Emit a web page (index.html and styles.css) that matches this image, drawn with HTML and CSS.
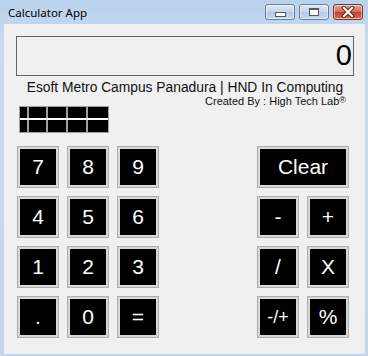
FILE: index.html
```html
<!DOCTYPE html>
<html lang="en">
<head>
    <meta charset="UTF-8">
    <meta name="viewport" content="width=device-width, initial-scale=1.0">
    <title>Calculator App</title>
    <link rel="stylesheet" href="styles.css">
</head>
<body>
    <div class="window">
        <div class="titlebar">
            <span class="title">Calculator App</span>
            <div class="controls">
                <span class="ctl"><span class="min-icon"></span></span>
                <span class="ctl"><span class="max-icon"></span></span>
                <span class="ctl close">
                    <svg width="16" height="12" viewBox="0 0 16 12">
                        <path d="M4 2 L12 10 M12 2 L4 10" stroke="#5a2a22" stroke-width="4" stroke-linecap="square"/>
                        <path d="M4 2 L12 10 M12 2 L4 10" stroke="#ffffff" stroke-width="2" stroke-linecap="square"/>
                    </svg>
                </span>
            </div>
        </div>

        <div class="client">
            <div class="display">0</div>
            <p class="campus">Esoft Metro Campus Panadura | HND In Computing</p>
            <p class="credit">Created By : High Tech Lab<span class="reg">&reg;</span></p>

            <!-- history grid -->
            <div class="history">
                <span></span><span></span><span></span><span></span><span></span>
                <span></span><span></span><span></span><span></span><span></span>
            </div>

            <div class="keypad">
                <div class="digits">
                    <button>7</button>
                    <button>8</button>
                    <button>9</button>
                    <button>4</button>
                    <button>5</button>
                    <button>6</button>
                    <button>1</button>
                    <button>2</button>
                    <button>3</button>
                    <button>.</button>
                    <button>0</button>
                    <button>=</button>
                </div>
                <div class="ops">
                    <button class="wide">Clear</button>
                    <button>-</button>
                    <button>+</button>
                    <button>/</button>
                    <button>X</button>
                    <button class="small">-/+</button>
                    <button>%</button>
                </div>
            </div>
        </div>
    </div>
</body>
</html>
```

FILE: styles.css
```css
body {
    margin: 0;
    font-family: "Liberation Sans", Arial, sans-serif;
}

.window {
    width: 368px;
    height: 356px;
    box-sizing: border-box;
    padding: 0 3px 2px 4px;
    display: flex;
    flex-direction: column;
    background: linear-gradient(#b9d1ea, #c6daf0 40px, #c2d7ee);
}

.titlebar {
    height: 24px;
    display: flex;
    align-items: flex-start;
    flex-shrink: 0;
}

.title {
    font-family: "Noto Sans", sans-serif;
    font-size: 11.5px;
    line-height: 16px;
    margin: 5px 0 0 4px;
    color: #000000;
}

.controls {
    margin: 4px 2px 0 auto;
    display: flex;
    gap: 4px;
}

.ctl {
    width: 30px;
    height: 16px;
    box-sizing: border-box;
    border: 1px solid #6b7f99;
    border-radius: 3px;
    background: linear-gradient(#dfe9f5, #c3d4e9 50%, #b3c8e1 51%, #c8d9ee);
    box-shadow: inset 0 0 0 1px rgba(255, 255, 255, 0.5);
    display: flex;
    align-items: center;
    justify-content: center;
}

.close {
    border-color: #7a3a30;
    background: linear-gradient(#e8a094, #d56a58 50%, #c2402c 51%, #d0705c);
}

.min-icon {
    width: 9px;
    height: 3px;
    margin-top: 4px;
    background: #ffffff;
    border: 1px solid #4a5a70;
}

.max-icon {
    width: 8px;
    height: 5px;
    background: #ffffff;
    border: 1px solid #4a5a70;
    border-top-width: 2px;
    box-shadow: inset 0 0 0 1px #ffffff;
}

.client {
    flex: 1;
    background: #f0f0f0;
    padding: 12px 11px 0 12px;
}

.display {
    height: 40px;
    box-sizing: border-box;
    border: 1px solid #646464;
    text-align: right;
    font-size: 29px;
    line-height: 36px;
    padding-right: 1px;
    color: #000000;
}

.campus {
    margin: 4px 0 0;
    text-align: center;
    font-size: 13.8px;
    line-height: 15px;
    color: #111111;
}

.credit {
    margin: 0;
    text-align: right;
    padding-right: 8px;
    font-size: 11px;
    line-height: 12px;
    color: #111111;
}

.credit .reg {
    font-size: 9px;
    vertical-align: 2px;
    line-height: 8px;
}

.history {
    margin: -1px 0 0 3px;
    width: 90px;
    box-sizing: border-box;
    display: grid;
    grid-template-columns: 7px 19px 20px 20px 22px;
    grid-template-rows: 11px 12px;
    row-gap: 2px;
    background: #ffffff;
    border: 1px solid #a0a0a0;
}

.history span {
    background: #000000;
    border-left: 2px solid #a0a0a0;
}

.history span:nth-child(5n+1) {
    border-left: none;
}

.keypad {
    margin-top: 13px;
    padding: 0 5px 0 1px;
    display: flex;
    justify-content: space-between;
}

.digits {
    display: grid;
    grid-template-columns: repeat(3, 42px);
    grid-auto-rows: 42px;
    gap: 8px;
}

.ops {
    display: grid;
    grid-template-columns: repeat(2, 42px);
    grid-auto-rows: 42px;
    gap: 8px;
}

button {
    margin: 0;
    padding: 0;
    background: #000000;
    color: #ffffff;
    border: 1px solid #adadad;
    box-shadow: inset 0 0 0 2px #d8d8d8;
    font-family: "Liberation Sans", Arial, sans-serif;
    font-size: 21px;
    cursor: pointer;
}

button.wide {
    grid-column: span 2;
}

button.small {
    font-size: 18px;
}
```
